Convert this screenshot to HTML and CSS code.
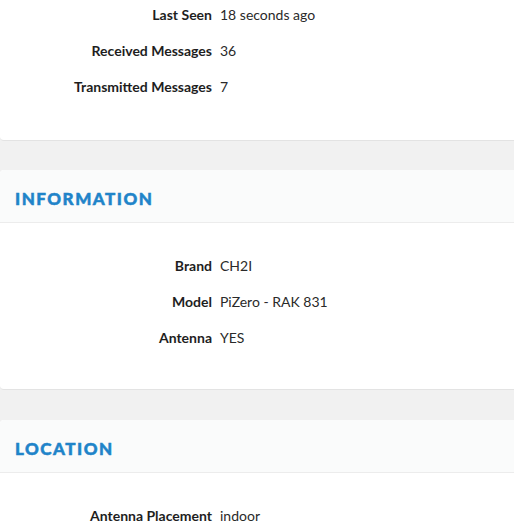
FILE: index.html
```html
<!DOCTYPE html>
<html>
<head>
<meta charset="utf-8">
<link rel="stylesheet" href="styles.css">
</head>
<body>
<div class="page">
  <section class="card card-first">
    <div class="card-body first-body">
      <div class="row"><div class="label">Last Seen</div><div class="value">18 seconds ago</div></div>
      <div class="row"><div class="label">Received Messages</div><div class="value">36</div></div>
      <div class="row"><div class="label">Transmitted Messages</div><div class="value">7</div></div>
    </div>
  </section>
  <section class="card">
    <header class="card-header"><h2>INFORMATION</h2></header>
    <div class="card-body">
      <div class="row"><div class="label">Brand</div><div class="value">CH2I</div></div>
      <div class="row"><div class="label">Model</div><div class="value">PiZero - RAK 831</div></div>
      <div class="row"><div class="label">Antenna</div><div class="value">YES</div></div>
    </div>
  </section>
  <section class="card">
    <header class="card-header"><h2>LOCATION</h2></header>
    <div class="card-body">
      <div class="row"><div class="label">Antenna Placement</div><div class="value">indoor</div></div>
    </div>
  </section>
</div>
</body>
</html>
```
FILE: styles.css
```css
html, body {
  margin: 0;
  padding: 0;
  background: #f1f1f1;
  overflow: hidden;
}
body {
  font-family: Lato, "Open Sans", sans-serif;
  font-size: 14px;
  color: #333;
}
.page {
  width: 524px;
  display: flex;
  flex-direction: column;
  gap: 30px;
}
.card {
  background: #fff;
  border-radius: 4px;
  border-bottom: 1px solid #e3e3e3;
}
.card-first {
  border-radius: 0 0 4px 4px;
  margin-top: -3px;
  margin-bottom: -1px;
}
.card-header {
  background: #fafbfb;
  height: 47px;
  padding-top: 5px;
  border-bottom: 1px solid #ececec;
  border-radius: 4px 4px 0 0;
  display: flex;
  align-items: center;
  padding-left: 15px;
}
.card-header h2 {
  margin: 0;
  font-size: 17px;
  font-weight: 900;
  letter-spacing: 1.5px;
  color: #1f84c9;
  -webkit-text-stroke: 0.5px #1f84c9;
}
.card-body {
  padding: 25px 0 33px;
}
.first-body {
  padding-top: 0;
  padding-bottom: 35px;
}
.row {
  display: grid;
  grid-template-columns: 212px 1fr;
  column-gap: 8px;
  height: 36px;
  align-items: center;
  line-height: 18px;
}
.label {
  text-align: right;
  font-weight: 700;
  color: #1e1e1e;
}
.value {
  color: #2a2a2a;
}
```
